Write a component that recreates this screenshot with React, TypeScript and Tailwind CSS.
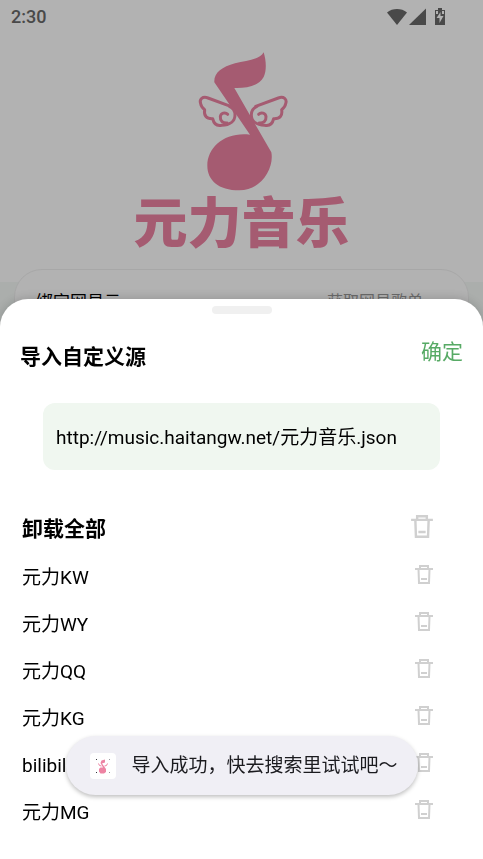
import type { ReactNode } from "react";

const sources = ["元力KW", "元力WY", "元力QQ", "元力KG", "bilibili", "元力MG"];

function TrashIcon({ className }: { className: string }) {
  return (
    <svg viewBox="0 0 18 19" fill="none" stroke="#d0d0d0" strokeWidth="2" className={className} aria-hidden="true">
      <path d="M0 4h18M5 4V1h8v3M3.5 4l.5 14h10l.5-14M6 14h6" />
    </svg>
  );
}

function Wing() {
  return (
    <g fill="none" stroke="#ed83a3" strokeWidth="9" strokeLinecap="round" strokeLinejoin="round">
      <path d="M152 184L84 159C68 153 57 163 62 176C63 184 67 189 74 194C71 212 79 222 98 221C102 238 111 244 125 241C150 240 165 228 165 210C165 196 158 188 148 184" />
      <path d="M143 208C136 200 122 204 121 215C120 228 129 235 141 234" />
    </g>
  );
}

function NoteLogo({ className }: { className: string }) {
  return (
    <svg viewBox="0 0 375 450" className={className} aria-hidden="true">
      <path
        fill="#ed83a3"
        d="M251 22C259 48 260 78 251 96C235 125 198 130 163 129L222 232L274 322C283 368 245 436 178 436C115 436 82 405 82 362C82 306 135 260 210 269L103 112C101 84 125 66 165 55C200 46 240 44 251 22Z"
      />
      <Wing />
      <g transform="translate(379 0) scale(-1 1)">
        <Wing />
      </g>
    </svg>
  );
}

function AppIcon() {
  return (
    <svg viewBox="0 0 26 26" className="size-[26px] rounded-sm bg-white" aria-hidden="true">
      <path fill="#33333a" d="M6 6h1v1H6zM6 19h1v1H6z" />
      <path fill="#99999f" d="M19 6h1v1h-1zM19 19h1v1h-1z" />
      <path fill="#ed83a3" d="M15 6.500v3l-3 1 4 5.500v3l-2 1.500h-3.500L9 18.500V16l1.500-1.500h2.500l-2.500-4.500 1-2.500Z" />
      <path fill="none" stroke="#ed83a3" d="M8.500 10.500l1 2 2 .5M17.500 10.500l-1 2-2 .5" />
    </svg>
  );
}

function StatusBar() {
  return (
    <div className="flex h-[33px] items-center justify-between pr-9 pl-[11px]">
      <span className="text-lg font-medium text-[#696969]">2:30</span>
      <svg viewBox="0 0 60 20" className="h-5 w-[60px]" fill="#696969" aria-hidden="true">
        <path d="M0 5.500C5.500.9 14.500.9 20 5.500L10 18Z" />
        <path d="M22 18L39 1.500V18Z" />
        <path d="M51 1h4v2h3v15H48V3h3Z" />
        <path d="M53.500 5l-4 6h3v5l4-7h-3ZM49 4h2v3h-2zM55 4h2v3h-2z" fill="#fff" />
      </svg>
    </div>
  );
}

function SourceRow({ name, children }: { name: string; children?: ReactNode }) {
  return (
    <li className="flex h-[47px] items-center justify-between">
      <span>{name}</span>
      <button type="button" aria-label={`卸载 ${name}`} className="-mt-2">
        {children}
      </button>
    </li>
  );
}

export default function App() {
  return (
    <div className="min-h-screen bg-white font-[Roboto,'Noto_Sans_CJK_SC',sans-serif] text-[19px] text-black">
      <div className="h-screen overflow-hidden bg-linear-to-b from-white from-[282px] to-[#f5faf7] to-[282px]">
        <StatusBar />
        <header className="flex flex-col items-center pt-3">
          <NoteLogo className="ml-0.5 h-[150px] w-[125px]" />
          <h1 className="-mt-1 text-[54px] leading-[68px] font-black text-[#ed83a3]">元力音乐</h1>
        </header>
        <main className="mx-3.5 mt-2.5 flex h-32 items-start justify-between rounded-[28px] border border-[#f0f0f0] bg-white pt-5 pr-[45px] pl-[21px]">
          <span className="text-[17px]">绑定网易云</span>
          <span className="text-base text-[#999999]">获取网易歌单</span>
        </main>
      </div>

      <div className="fixed inset-0 flex flex-col justify-end bg-black/30">
        <section aria-labelledby="sheet-title" className="rounded-t-[28px] bg-white pt-[7px] pb-[22px] shadow-[0_0_12px_rgba(0,0,0,0.2)]">
          <div className="mx-auto h-2 w-[60px] rounded-full bg-[#f0f0f0]" />
          <div className="flex items-start justify-between px-5 pt-[22px]">
            <h2 id="sheet-title" className="pt-[5px] text-[21px] leading-8 font-bold">导入自定义源</h2>
            <button type="button" className="text-[21px] leading-8 text-[#57aa65]">确定</button>
          </div>
          <div className="mx-[43px] mt-[30px]">
            <input
              type="text"
              aria-label="自定义源地址"
              defaultValue="http://music.haitangw.net/元力音乐.json"
              className="h-[67px] w-full rounded-xl bg-[#f0f7f0] px-[13px] pb-0.5 outline-none"
            />
          </div>
          <div className="mt-[35px] pr-[50px] pl-[22px]">
            <div className="flex h-[50px] items-center justify-between">
              <h3 className="text-[21px] font-bold">卸载全部</h3>
              <button type="button" aria-label="卸载全部" className="-mt-2">
                <TrashIcon className="h-[23px] w-[22px]" />
              </button>
            </div>
            <ul>
              {sources.map((name) => (
                <SourceRow key={name} name={name}>
                  <TrashIcon className="h-[19px] w-[18px]" />
                </SourceRow>
              ))}
            </ul>
          </div>
        </section>
      </div>

      <div role="status" className="fixed bottom-16 left-1/2 flex h-[59px] -translate-x-1/2 items-center gap-4 rounded-full bg-[#f0eff5] pr-5 pl-6 whitespace-nowrap text-[#1b1b1f] shadow-[0_2px_4px_rgba(0,0,0,0.25)]">
        <AppIcon />
        <span className="pt-0.5">导入成功，快去搜索里试试吧～</span>
      </div>
    </div>
  );
}
